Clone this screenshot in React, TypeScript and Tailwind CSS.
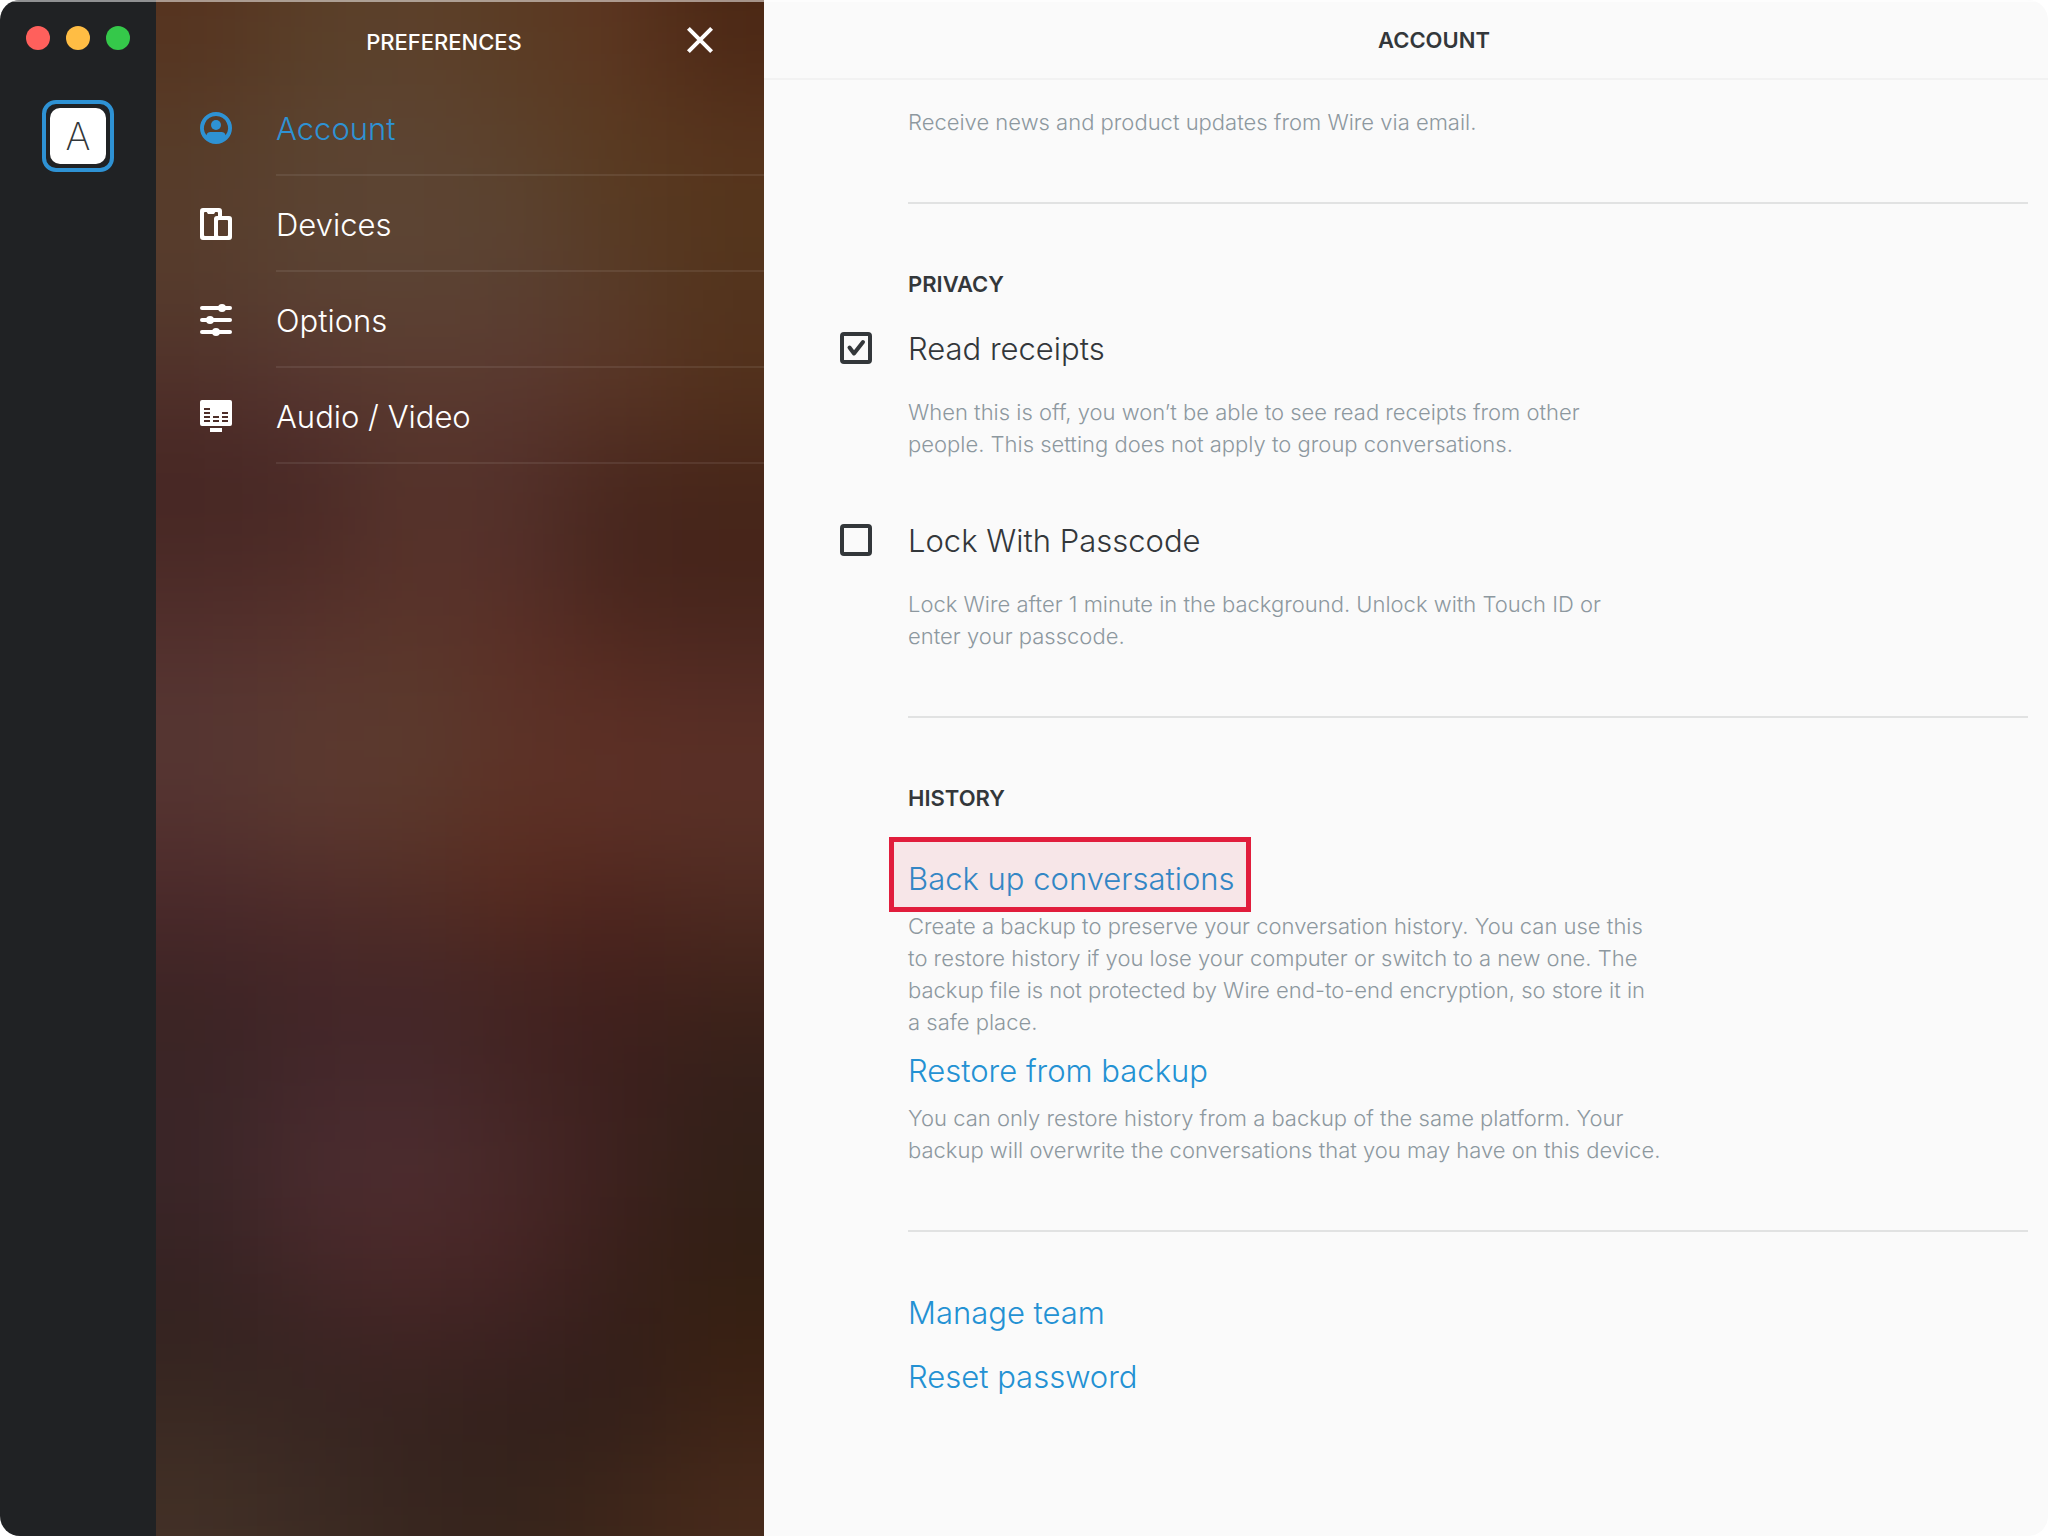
import React, { useState } from "react";
import type { ReactNode } from "react";
import clsx from "clsx";

// Colour samples of the blurred wallpaper, row by row from the top
const WALLPAPER = [
  ["#563420", "#5a3f28", "#5c412b", "#5b3c24", "#5c3520", "#4c2815"],
  ["#573c28", "#5b4330", "#5d4432", "#5b402a", "#5a3a20", "#57331d"],
  ["#583d2c", "#5b4432", "#5c4533", "#5b4331", "#583b23", "#55361c"],
  ["#553a2c", "#5a4032", "#5c4233", "#5a3f32", "#583a28", "#53331d"],
  ["#50302a", "#573530", "#5a3a2f", "#5a3830", "#5a3526", "#53311c"],
  ["#462623", "#4a2a27", "#55342b", "#53302a", "#4a281e", "#48271a"],
  ["#4a2a26", "#4e2b26", "#58322a", "#54302a", "#46251d", "#452419"],
  ["#53302d", "#58332d", "#5a362a", "#5b2f26", "#52291f", "#4c2820"],
  ["#563733", "#5b3a30", "#5b3b2e", "#5c3328", "#5c2f25", "#5a2f26"],
  ["#54322f", "#5b3830", "#5b372b", "#5c3024", "#5c3026", "#583026"],
  ["#4a292a", "#4e2b29", "#512d26", "#55291f", "#4e251d", "#4e2a21"],
  ["#3d2424", "#432527", "#452728", "#432421", "#42201d", "#40231a"],
  ["#3a2526", "#43272a", "#46292c", "#432423", "#3c201d", "#35201a"],
  ["#3b2628", "#4a2b2f", "#4d2d30", "#472828", "#3e211f", "#332018"],
  ["#372324", "#462829", "#4b2929", "#472525", "#3a201b", "#321f14"],
  ["#342320", "#3b2423", "#402423", "#3c2221", "#351f1a", "#382012"],
  ["#3a2922", "#382622", "#36231f", "#33201b", "#33201a", "#3e2316"],
  ["#423026", "#3c2b23", "#38261f", "#36241c", "#3e2619", "#472a1b"],
];

const Wallpaper = () => (
  <svg
    className="absolute inset-0 -z-10 h-full w-full"
    viewBox="0 0 608 1536"
    preserveAspectRatio="none"
    aria-hidden="true"
  >
    <defs>
      <filter id="soften" x="-20%" y="-20%" width="140%" height="140%" colorInterpolationFilters="sRGB">
        <feGaussianBlur stdDeviation="48" />
      </filter>
    </defs>
    <g filter="url(#soften)">
      {WALLPAPER.map((row, y) =>
        row.map((fill, x) => {
          // edge cells run past the panel so that the blur stays opaque
          const left = x === 0 ? -160 : x * 102;
          const right = x === row.length - 1 ? 770 : (x + 1) * 102 + 1;
          const top = y === 0 ? -160 : y * 86;
          const bottom = y === WALLPAPER.length - 1 ? 1700 : (y + 1) * 86 + 1;
          return <rect key={`${x}-${y}`} x={left} y={top} width={right - left} height={bottom - top} fill={fill} />;
        })
      )}
    </g>
  </svg>
);

const AccountIcon = () => (
  <svg className="size-8" viewBox="0 0 32 32" fill="currentColor">
    <path
      fillRule="evenodd"
      d="M16 0a16 16 0 1 1 0 32 16 16 0 0 1 0-32Zm0 4A12 12 0 0 0 6.400 23.200C7 21 8.500 20 10.500 20h11c2 0 3.500 1 4.100 3.200A12 12 0 0 0 16 4Z"
    />
    <circle cx="16" cy="13" r="5" />
  </svg>
);

const DevicesIcon = () => (
  <svg className="size-8" viewBox="0 0 32 32" fill="currentColor">
    <path
      fillRule="evenodd"
      d="M3 0h16a3 3 0 0 1 3 3v5h7a3 3 0 0 1 3 3v18a3 3 0 0 1-3 3H3a3 3 0 0 1-3-3V3a3 3 0 0 1 3-3Zm2 4a1 1 0 0 0-1 1v22a1 1 0 0 0 1 1h9V11a3 3 0 0 1 3-3h1V5a1 1 0 0 0-1-1h-1.500c-.7 0-.8 2-2 2h-5C7.300 6 7.200 4 6.500 4Zm14 8a1 1 0 0 0-1 1v14a1 1 0 0 0 1 1h8a1 1 0 0 0 1-1V13a1 1 0 0 0-1-1Z"
    />
  </svg>
);

const OptionsIcon = () => (
  <svg className="size-8" viewBox="0 0 32 32" fill="currentColor">
    <rect y="2" width="32" height="4" rx="2" />
    <rect y="14" width="32" height="4" rx="2" />
    <rect y="26" width="32" height="4" rx="2" />
    <circle cx="22" cy="4" r="4" />
    <circle cx="10" cy="16" r="4" />
    <circle cx="16" cy="28" r="4" />
  </svg>
);

const AudioVideoIcon = () => (
  <svg className="size-8" viewBox="0 0 32 32" fill="currentColor">
    <path
      fillRule="evenodd"
      d="M2 0h28a2 2 0 0 1 2 2v22a2 2 0 0 1-2 2H2a2 2 0 0 1-2-2V2a2 2 0 0 1 2-2ZM4 8v2h6V8Zm0 4v2h6v-2Zm0 4v2h6v-2Zm0 4v2h6v-2Zm9-4v2h6v-2Zm0 4v2h6v-2Zm9-8v2h6v-2Zm0 4v2h6v-2Zm0 4v2h6v-2ZM10 28h12v4H10Z"
    />
  </svg>
);

const CloseIcon = () => (
  <svg className="size-8" viewBox="0 0 32 32" fill="none" stroke="currentColor" strokeWidth="4">
    <path d="M4.400 4.400 27.600 27.600M27.600 4.400 4.400 27.600" />
  </svg>
);

const NAV_ITEMS = [
  { label: "Account", icon: <AccountIcon /> },
  { label: "Devices", icon: <DevicesIcon /> },
  { label: "Options", icon: <OptionsIcon /> },
  { label: "Audio / Video", icon: <AudioVideoIcon /> },
];

interface SectionProps {
  title?: string;
  last?: boolean;
  children: ReactNode;
}

const Section = ({ title, last, children }: SectionProps) => (
  <section className={clsx("py-16", !last && "border-b-2 border-[#e1e2e2]")}>
    {title && <h2 className="text-[22px] leading-8 font-semibold">{title}</h2>}
    {children}
  </section>
);

const Hint = ({ className, children }: { className?: string; children: ReactNode }) => (
  <p className={clsx("max-w-[768px] text-[22px] leading-8 font-light text-[#8d989f]", className)}>{children}</p>
);

interface CheckSettingProps {
  id: string;
  label: string;
  defaultChecked?: boolean;
  className?: string;
  children: ReactNode;
}

const CheckSetting = ({ id, label, defaultChecked, className, children }: CheckSettingProps) => {
  const [checked, setChecked] = useState(!!defaultChecked);

  return (
    <div className={className}>
      <div className="-ml-17 flex items-start gap-9">
        <span className="relative size-8">
          <input
            id={id}
            type="checkbox"
            checked={checked}
            onChange={(e) => setChecked(e.target.checked)}
            className="block size-8 appearance-none rounded-sm border-4 border-[#33373a]"
          />
          {checked && (
            <svg
              className="pointer-events-none absolute inset-0 size-8"
              viewBox="0 0 32 32"
              fill="none"
              stroke="currentColor"
              strokeWidth="4"
              strokeLinecap="round"
              strokeLinejoin="round"
            >
              <path d="m9.500 15.500 4.500 6 9-11.500" />
            </svg>
          )}
        </span>
        <label htmlFor={id} className="text-[31px] leading-[34px] font-light">
          {label}
        </label>
      </div>
      <Hint className="mt-7.5">{children}</Hint>
    </div>
  );
};

const ActionLink = ({ className, children }: { className?: string; children: ReactNode }) => (
  <a href="#" className={clsx("block w-fit text-[31px] leading-[34px] font-light text-[#2391d3]", className)}>
    {children}
  </a>
);

export default function App() {
  const [active, setActive] = useState("Account");

  return (
    <div className="relative flex min-h-screen overflow-hidden rounded-[20px] bg-[#fafafa] font-['Inter','Liberation_Sans',sans-serif] text-[#33373a]">
      <div className="pointer-events-none absolute inset-x-0 top-0 z-10 h-0.5 bg-white/50" />

      {/* Workspace bar */}
      <aside className="flex w-[156px] shrink-0 flex-col items-center bg-[#202224] pt-[26px]">
        <div className="flex gap-4">
          <button aria-label="Close window" className="size-6 rounded-full bg-[#ff605c]" />
          <button aria-label="Minimize window" className="size-6 rounded-full bg-[#ffbd44]" />
          <button aria-label="Zoom window" className="size-6 rounded-full bg-[#35c84a]" />
        </div>
        <button className="mt-[50px] flex size-[72px] items-center justify-center rounded-[14px] border-4 border-[#2e92d4]">
          <span className="flex size-14 items-center justify-center rounded-[10px] bg-white text-[38px] leading-none font-extralight">
            A
          </span>
        </button>
      </aside>

      {/* Preferences */}
      <div className="relative isolate w-[608px] shrink-0 overflow-hidden bg-[#4a2b25] text-white">
        <Wallpaper />
        <header className="flex h-20 items-center px-12">
          <h1 className="flex-1 pt-1 text-center text-[22px] leading-8 font-medium">PREFERENCES</h1>
          <button aria-label="Close preferences">
            <CloseIcon />
          </button>
        </header>
        <nav>
          {NAV_ITEMS.map(({ label, icon }) => (
            <button
              key={label}
              onClick={() => setActive(label)}
              className={clsx("flex w-full items-center gap-11 pl-11", active === label && "text-[#2e92d4]")}
            >
              {icon}
              <span className="h-24 flex-1 border-b-2 border-white/8 pt-px text-left text-[31px] leading-24 font-light">
                {label}
              </span>
            </button>
          ))}
        </nav>
      </div>

      {/* Account settings */}
      <main className="min-w-0 flex-1">
        <header className="flex h-20 items-center justify-center border-b-2 border-[#f2f2f2] pt-0.5 pl-14">
          <h1 className="text-[22px] leading-8 font-semibold">ACCOUNT</h1>
        </header>
        <div className="-mt-[38px] pr-5 pl-36">
          <Section>
            <Hint>Receive news and product updates from Wire via email.</Hint>
          </Section>

          <Section title="PRIVACY">
            <CheckSetting id="read-receipts" label="Read receipts" defaultChecked className="mt-8">
              When this is off, you won’t be able to see read receipts from other
              <br />
              people. This setting does not apply to group conversations.
            </CheckSetting>
            <CheckSetting id="passcode-lock" label="Lock With Passcode" className="mt-16">
              Lock Wire after 1 minute in the background. Unlock with Touch ID or
              <br />
              enter your passcode.
            </CheckSetting>
          </Section>

          <Section title="HISTORY">
            <div className="relative mt-12 w-fit">
              <ActionLink>Back up conversations</ActionLink>
              <div className="pointer-events-none absolute -top-[25px] -right-4 -bottom-4 -left-[19px] border-5 border-[#e11d3c] bg-[#e11d3c]/9" />
            </div>
            <Hint className="mt-3.5">
              Create a backup to preserve your conversation history. You can use this
              <br />
              to restore history if you lose your computer or switch to a new one. The
              <br />
              backup file is not protected by Wire end-to-end encryption, so store it in
              <br />a safe place.
            </Hint>
            <ActionLink className="mt-4">Restore from backup</ActionLink>
            <Hint className="mt-3.5">
              You can only restore history from a backup of the same platform. Your
              <br />
              backup will overwrite the conversations that you may have on this device.
            </Hint>
          </Section>

          <Section last>
            <ActionLink>Manage team</ActionLink>
            <ActionLink className="mt-7.5">Reset password</ActionLink>
          </Section>
        </div>
      </main>
    </div>
  );
}
